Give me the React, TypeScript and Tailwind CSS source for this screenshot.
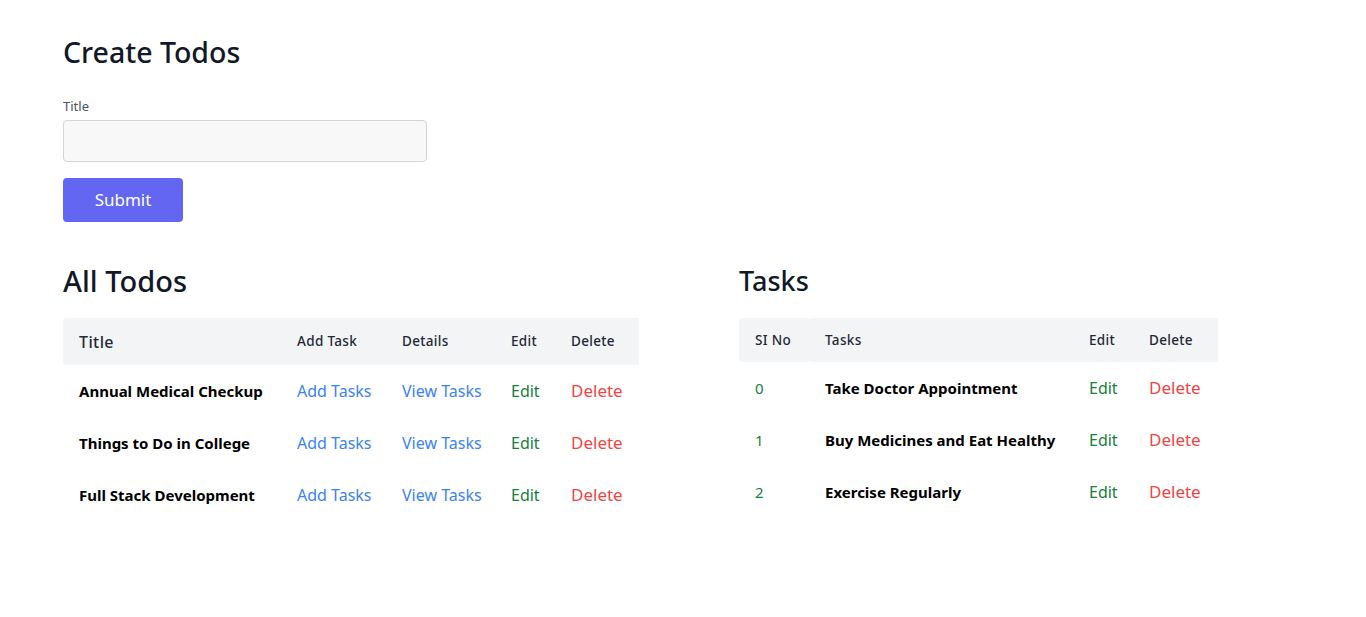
const todos = ["Annual Medical Checkup", "Things to Do in College", "Full Stack Development"];
const tasks = ["Take Doctor Appointment", "Buy Medicines and Eat Healthy", "Exercise Regularly"];

export default function App() {
  return (
    <div className="min-h-screen bg-white px-[63px] pt-[34px] font-['Noto_Sans',sans-serif] text-gray-900">
      <h1 className="text-[28.5px] leading-9 font-medium text-[#111827]">Create Todos</h1>
      <label className="mt-[26px] block text-[13px] leading-5 text-[#475569]">Title</label>
      <input className="mt-1 block h-[42px] w-[364px] rounded border border-[#d1d5db] bg-[#f8f8f8] px-3" />
      <button className="mt-4 h-11 w-[120px] rounded bg-[#6366f1] text-[17px] text-white">Submit</button>

      <div className="mt-[41px] flex gap-[100px]">
        <div>
          <h2 className="mb-[19px] text-[29px] leading-9 font-medium text-[#111827]">All Todos</h2>
          <table className="w-[576px] table-fixed border-collapse text-left">
            <thead>
              <tr className="h-[47px] bg-[#f3f4f6] text-[#1f2937]">
                <th className="w-[218px] rounded-l px-4 text-[16px] font-medium tracking-wide">Title</th>
                <th className="w-[105px] px-4 text-[13.5px] font-medium tracking-wide">Add Task</th>
                <th className="w-[109px] px-4 text-[13.5px] font-medium tracking-wide">Details</th>
                <th className="w-[60px] px-4 text-[13.5px] font-medium tracking-wide">Edit</th>
                <th className="w-[84px] px-4 text-[13.5px] font-medium tracking-wide">Delete</th>
              </tr>
            </thead>
            <tbody>
              {todos.map((t) => (
                <tr key={t} className="h-[52px]">
                  <td className="px-4 text-[15px] font-bold whitespace-nowrap text-black">{t}</td>
                  <td className="px-4 text-[16px] whitespace-nowrap text-[#3b82f6]">Add Tasks</td>
                  <td className="px-4 text-[16px] whitespace-nowrap text-[#3b82f6]">View Tasks</td>
                  <td className="px-4 text-[16px] text-[#15803d]">Edit</td>
                  <td className="px-4 text-[17px] text-[#ef4444]">Delete</td>
                </tr>
              ))}
            </tbody>
          </table>
        </div>

        <div>
          <h2 className="mb-[19px] text-[27px] leading-9 font-medium text-[#111827]">Tasks</h2>
          <table className="w-[479px] table-fixed border-collapse text-left">
            <thead>
              <tr className="h-11 text-[#1f2937]">
                <th className="w-[70px] rounded-l bg-[#f3f4f6] px-4 text-[13.5px] font-medium tracking-wide">SI No</th>
                <th className="w-[264px] rounded-l bg-[#f3f4f6] px-4 text-[13.5px] font-medium tracking-wide">Tasks</th>
                <th className="w-[60px] bg-[#f3f4f6] px-4 text-[13.5px] font-medium tracking-wide">Edit</th>
                <th className="w-[85px] bg-[#f3f4f6] px-4 text-[13.5px] font-medium tracking-wide">Delete</th>
              </tr>
            </thead>
            <tbody>
              {tasks.map((t, i) => (
                <tr key={t} className="h-[52px]">
                  <td className="px-4 text-[15px] text-[#15803d]">{i}</td>
                  <td className="px-4 text-[15px] font-bold whitespace-nowrap text-black">{t}</td>
                  <td className="px-4 text-[16px] text-[#15803d]">Edit</td>
                  <td className="px-4 text-[17px] text-[#ef4444]">Delete</td>
                </tr>
              ))}
            </tbody>
          </table>
        </div>
      </div>
    </div>
  );
}
